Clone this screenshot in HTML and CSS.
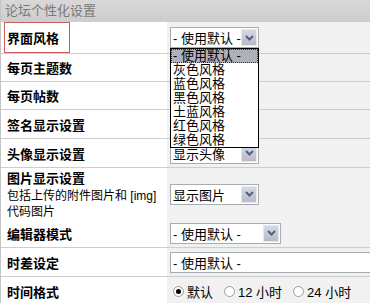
FILE: index.html
```html
<!DOCTYPE html>
<html>
  <head>
    <meta charset="UTF-8">
    <title>论坛个性化设置</title>
    <link rel="stylesheet" href="styles.css">
  </head>
  <body>
    <div class="panel">
      <div class="panel-title">论坛个性化设置</div>

      <div class="row row-first">
        <div class="label"><span class="label-box">界面风格</span></div>
        <div class="field">
          <div class="select">
            <span class="select-text">- 使用默认 -</span>
            <span class="select-btn"><svg width="9" height="6" viewBox="0 0 9 6"><path d="M1 1 L4.5 4.5 L8 1" fill="none" stroke="#4d6185" stroke-width="2"/></svg></span>
          </div>
          <ul class="dropdown">
            <li class="active">- 使用默认 -</li>
            <li>灰色风格</li>
            <li>蓝色风格</li>
            <li>黑色风格</li>
            <li>土蓝风格</li>
            <li>红色风格</li>
            <li>绿色风格</li>
          </ul>
        </div>
      </div>

      <div class="row row-short">
        <div class="label">每页主题数</div>
        <div class="field"></div>
      </div>

      <div class="row row-short">
        <div class="label">每页帖数</div>
        <div class="field"></div>
      </div>

      <div class="row">
        <div class="label">签名显示设置</div>
        <div class="field"></div>
      </div>

      <div class="row">
        <div class="label">头像显示设置</div>
        <div class="field">
          <div class="select">
            <span class="select-text">显示头像</span>
            <span class="select-btn"><svg width="9" height="6" viewBox="0 0 9 6"><path d="M1 1 L4.5 4.5 L8 1" fill="none" stroke="#4d6185" stroke-width="2"/></svg></span>
          </div>
        </div>
      </div>

      <div class="row row-tall">
        <div class="label">图片显示设置<div class="note">包括上传的附件图片和 [img]<br>代码图片</div></div>
        <div class="field">
          <div class="select">
            <span class="select-text">显示图片</span>
            <span class="select-btn"><svg width="9" height="6" viewBox="0 0 9 6"><path d="M1 1 L4.5 4.5 L8 1" fill="none" stroke="#4d6185" stroke-width="2"/></svg></span>
          </div>
        </div>
      </div>

      <div class="row">
        <div class="label">编辑器模式</div>
        <div class="field">
          <div class="select select-wide">
            <span class="select-text">- 使用默认 -</span>
            <span class="select-btn"><svg width="9" height="6" viewBox="0 0 9 6"><path d="M1 1 L4.5 4.5 L8 1" fill="none" stroke="#4d6185" stroke-width="2"/></svg></span>
          </div>
        </div>
      </div>

      <div class="row">
        <div class="label">时差设定</div>
        <div class="field">
          <div class="select select-full">
            <span class="select-text">- 使用默认 -</span>
          </div>
        </div>
      </div>

      <div class="row">
        <div class="label">时间格式</div>
        <div class="field radios">
          <label class="radio"><span class="dot checked"></span>默认</label>
          <label class="radio"><span class="dot"></span>12 小时</label>
          <label class="radio"><span class="dot"></span>24 小时</label>
        </div>
      </div>
    </div>
  </body>
</html>
```

FILE: styles.css
```css
* {
  box-sizing: border-box;
}
body {
  margin: 0;
  background-color: #ffffff;
  font-family: "Liberation Sans", "Noto Sans CJK SC", sans-serif;
  font-size: 13px;
  color: #000;
  overflow: hidden;
}
.panel {
  border-left: 1px solid #c4c4c4;
  width: 390px;
}
.panel-title {
  height: 22px;
  line-height: 21px;
  padding-left: 4px;
  background: linear-gradient(#d8d8d8, #cdcdcd);
  color: #7a7a7a;
  font-size: 13px;
}
.row {
  display: grid;
  grid-template-columns: 166px 1fr;
  height: 29px;
  border-bottom: 1px solid #cdcdcd;
}
.row-first {
  height: 32px;
}
.row-short {
  height: 28px;
}
.row-tall {
  height: 51px;
}
.label {
  display: flex;
  flex-direction: column;
  justify-content: center;
  padding-left: 6px;
  font-weight: bold;
  white-space: nowrap;
  background-color: #ffffff;
}
.label-box {
  display: flex;
  align-items: center;
  margin-left: -3px;
  padding-left: 2px;
  width: 66px;
  height: 31px;
  border: 1px solid #cc5d5d;
}
.note {
  font-weight: normal;
  font-size: 12px;
  line-height: 16px;
  margin-top: 1px;
}
.field {
  position: relative;
  display: flex;
  align-items: center;
  padding-left: 3px;
  background-color: #f1f1f1;
}
.select {
  display: flex;
  align-items: center;
  width: 89px;
  height: 21px;
  border: 1px solid #a5acb2;
  background-color: #fff;
}
.select-wide {
  width: 111px;
}
.select-full {
  width: 260px;
}
.select-text {
  flex: 1;
  padding-left: 2px;
  white-space: nowrap;
}
.select-btn {
  display: flex;
  align-items: center;
  justify-content: center;
  width: 16px;
  height: 17px;
  margin-right: 1px;
  background: linear-gradient(#d6d9e2, #b9bcc6);
  border: 1px solid #e6e8ee;
}
.dropdown {
  position: absolute;
  left: 3px;
  top: 26px;
  z-index: 2;
  width: 89px;
  margin: 0;
  padding: 0;
  list-style: none;
  border: 1px solid #000;
  background-color: #fff;
}
.dropdown li {
  height: 14px;
  line-height: 14px;
  padding-left: 2px;
  white-space: nowrap;
}
.dropdown li.active {
  background-color: #b0b0bb;
  outline: 1px dotted #333;
  outline-offset: -1px;
}
.radios {
  padding-left: 6px;
}
.radio {
  display: flex;
  align-items: center;
  margin-right: 11px;
}
.dot {
  position: relative;
  width: 11px;
  height: 11px;
  margin-right: 3px;
  border-radius: 50%;
  border: 1px solid #9a9a9a;
  background-color: #fff;
}
.dot.checked::after {
  content: "";
  position: absolute;
  left: 2px;
  top: 2px;
  width: 5px;
  height: 5px;
  border-radius: 50%;
  background-color: #000;
}
```
